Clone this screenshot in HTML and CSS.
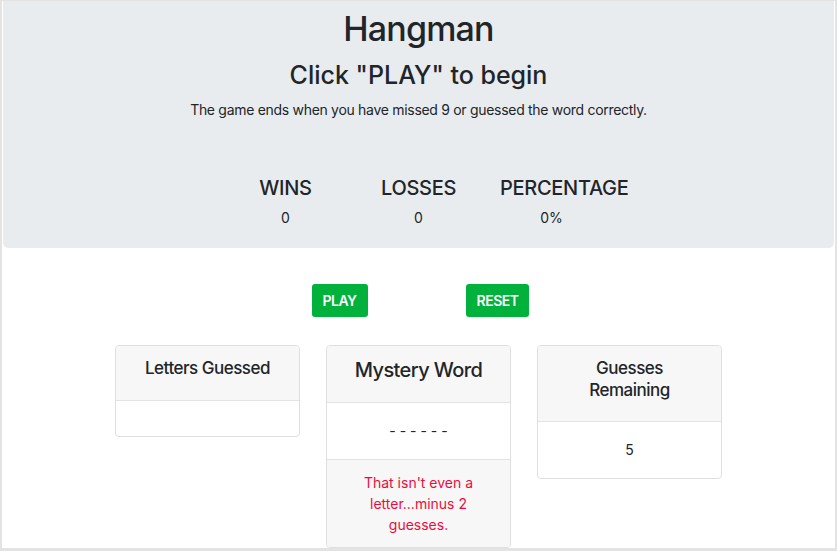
FILE: index.html
```html
<!DOCTYPE html>
<html>
<head>
<meta charset="utf-8">
<link rel="stylesheet" href="styles.css">
</head>
<body>
<div class="frame">
  <header class="jumbo">
    <h1 class="title">Hangman</h1>
    <h2 class="subtitle">Click "PLAY" to begin</h2>
    <p class="lead">The game ends when you have missed 9 or guessed the word correctly.</p>
    <div class="stats">
      <div class="stat"><div class="stat-label">WINS</div><div class="stat-value">0</div></div>
      <div class="stat"><div class="stat-label">LOSSES</div><div class="stat-value">0</div></div>
      <div class="stat"><div class="stat-label">PERCENTAGE</div><div class="stat-value">0%</div></div>
    </div>
  </header>
  <div class="buttons">
    <button class="btn">PLAY</button>
    <button class="btn">RESET</button>
  </div>
  <div class="cards">
    <div class="card">
      <div class="card-header"><h5 class="card-title">Letters Guessed</h5></div>
      <div class="card-body empty"></div>
    </div>
    <div class="card">
      <div class="card-header"><h4 class="card-title big">Mystery Word</h4></div>
      <div class="card-body">- - - - - -</div>
      <div class="card-footer">That isn't even a letter...minus 2 guesses.</div>
    </div>
    <div class="card">
      <div class="card-header"><h5 class="card-title">Guesses Remaining</h5></div>
      <div class="card-body">5</div>
    </div>
  </div>
</div>
</body>
</html>
```

FILE: styles.css
```css
* { box-sizing: border-box; }
html, body { margin: 0; padding: 0; }
body {
  font-family: Inter, "Liberation Sans", sans-serif;
  color: #212529;
  background: #fff;
  width: 837px;
  height: 551px;
  overflow: hidden;
}
.frame {
  height: 551px;
  border-style: solid;
  border-color: #e3e3e3;
  border-width: 1px 2px 3px 2px;
  background: #fff;
  text-align: center;
}
.jumbo {
  background: #e9ecef;
  margin: 0 1px;
  height: 247px;
  border-radius: 0 0 5px 5px;
  padding-top: 8px;
}
.title {
  margin: 0;
  font-size: 34px;
  font-weight: 500;
  line-height: 40px;
  letter-spacing: -0.8px;
}
.subtitle {
  margin: 11px 0 0;
  font-size: 25px;
  font-weight: 500;
  line-height: 30px;
}
.lead {
  margin: 9px 0 0;
  font-size: 14px;
  line-height: 21px;
  letter-spacing: -0.3px;
}
.stats {
  display: flex;
  justify-content: center;
  margin-top: 56px;
}
.stat {
  width: 133px;
  padding: 0 15px;
}
.stat-label {
  font-size: 20px;
  font-weight: 500;
  line-height: 24px;
  white-space: nowrap;
  letter-spacing: -0.3px;
}
.stat-value {
  font-size: 14px;
  line-height: 21px;
  margin-top: 7px;
}
.buttons {
  display: flex;
  justify-content: center;
  gap: 98px;
  margin-top: 36px;
  padding-left: 4px;
}
.btn {
  font-family: inherit;
  background: #00b13c;
  color: #fff;
  border: none;
  border-radius: 3px;
  font-size: 14px;
  font-weight: 600;
  line-height: 21px;
  padding: 6px 11px;
  letter-spacing: -0.5px;
}
.cards {
  display: flex;
  justify-content: center;
  align-items: flex-start;
  gap: 26px;
  margin-top: 28px;
}
.card {
  width: 185px;
  border: 1px solid #dfdfdf;
  border-radius: 4px;
  overflow: hidden;
  background: #fff;
}
.card-header {
  background: #f7f7f7;
  border-bottom: 1px solid #e3e3e3;
  padding: 12px 20px 12px;
}
.card-title {
  margin: 0 0 8px;
  font-size: 17px;
  font-weight: 500;
  line-height: 21.5px;
  letter-spacing: -0.5px;
}
.card-title.big {
  font-size: 20px;
  line-height: 24px;
  letter-spacing: -0.6px;
}
.card-body {
  padding: 18px 20px;
  font-size: 14px;
  line-height: 20px;
}
.card-body.empty { height: 35px; padding: 0; }
.card-footer {
  background: #f7f7f7;
  border-top: 1px solid #e3e3e3;
  color: #ee0a3e;
  font-size: 14px;
  line-height: 21px;
  padding: 12px 20px;
}
```
